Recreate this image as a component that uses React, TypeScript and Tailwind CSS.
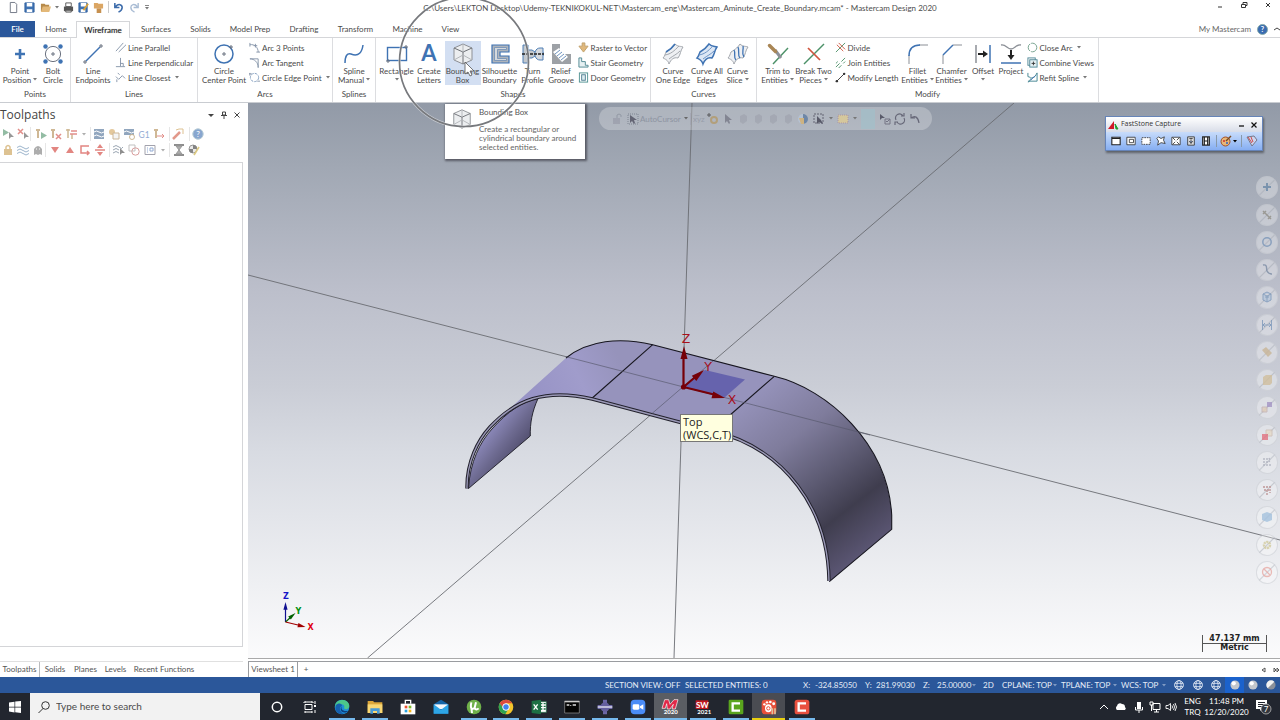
import React from "react";

type Kids = { children?: React.ReactNode };

function Ico({ children, c = "size-6", v = 24 }: Kids & { c?: string; v?: number }) {
  return (
    <svg viewBox={`0 0 ${v} ${v}`} className={`${c} shrink-0 overflow-visible`} fill="none" strokeWidth="1" stroke="#6b7280" aria-hidden="true">
      {children}
    </svg>
  );
}

const BLUE = "#3f73b3";
const GRAY = "#8b8f96";

function Caret({ c = "text-[#777]" }: { c?: string }) {
  return (
    <svg viewBox="0 0 4 3" className={`inline-block h-[3px] w-1 shrink-0 ${c}`} aria-hidden="true">
      <path d="M0 0h4L2 2.5z" fill="currentColor" />
    </svg>
  );
}

function Big({ icon, lines, w, menu, active }: { icon: React.ReactNode; lines: string[]; w: string; menu?: boolean; active?: boolean }) {
  return (
    <button className={`${w} ${active ? "bg-[#d3dff2]" : ""} mt-px flex h-[44px] shrink-0 flex-col items-center pt-px`}>
      <Ico>{icon}</Ico>
      {lines.map((l, i) => (
        <span key={l} className="flex h-[9px] items-center gap-0.5 whitespace-nowrap leading-[10px]">
          {l}
          {menu && i === lines.length - 1 && i > 0 && <Caret />}
        </span>
      ))}
      {menu && lines.length === 1 && <span className="flex h-[9px] items-center"><Caret /></span>}
    </button>
  );
}

function Small({ icon, label, menu }: { icon: React.ReactNode; label: string; menu?: boolean }) {
  return (
    <button className="flex h-[15px] items-center gap-0.5 whitespace-nowrap">
      <Ico c="size-[11px]" v={12}>{icon}</Ico>
      {label}
      {menu && <span className="ml-0.5 flex"><Caret /></span>}
    </button>
  );
}

function Group({ name, w, children }: Kids & { name: string; w: string }) {
  return (
    <section aria-label={name} className={`${w} flex shrink-0 flex-col`}>
      <div className="flex h-full border-r border-[#dcdde0]">
        <div className="flex w-full flex-col">
          <div className="flex h-[49px] items-start justify-center pt-0.5">{children}</div>
          <div className="text-center leading-4">{name}</div>
        </div>
      </div>
    </section>
  );
}

const surface = "M5 10C10 7 12 5 14 2C17 5 20 4 22 5C19 9 20 12 17 16C13 15 10 17 8 22C7 18 4 17 2 16C4 14 4 12 5 10z";

function Ribbon() {
  return (
    <div className="flex h-[65px] overflow-hidden border-b border-[#c9ccd1] bg-white">
      <Group name="Points" w="w-[71px]">
        <Big w="w-[36px]" lines={["Point", "Position"]} menu icon={<path d="M12 7v10M7 12h10" stroke={BLUE} strokeWidth="2.6" />} />
        <Big w="w-[30px]" lines={["Bolt", "Circle"]} icon={<>
          <circle cx="12" cy="12" r="7.6" /><path d="M12 10v4M10 12h4" />
          <g fill={BLUE} stroke="none"><circle cx="4.500" cy="4.500" r="2.200" /><circle cx="19.500" cy="4.500" r="2.200" /><circle cx="4.500" cy="19.500" r="2.200" /><circle cx="19.500" cy="19.500" r="2.200" /></g>
        </>} />
      </Group>
      <Group name="Lines" w="w-[127px]">
        <Big w="w-[40px]" lines={["Line", "Endpoints"]} icon={<>
          <path d="M5 19L19 5" stroke={BLUE} strokeWidth="1.500" /><path d="M4 18v4M2 20h4M20 2v4M18 4h4" />
        </>} />
        <div className="ml-0.5 flex w-[80px] flex-col">
          <Small label="Line Parallel" icon={<path d="M1 10L9 1M4 11L12 3" stroke="#8494a8" />} />
          <Small label="Line Perpendicular" icon={<path d="M6 1v9M1 10.500h10M6 7h3v3" stroke="#8494a8" />} />
          <Small label="Line Closest" menu icon={<path d="M1 5l3 3M4 8L8 4M8 4l3 3M3 1l2 2M2 8v3" stroke="#8494a8" />} />
        </div>
      </Group>
      <Group name="Arcs" w="w-[135px]">
        <Big w="w-[46px]" lines={["Circle", "Center Point"]} icon={<>
          <circle cx="12" cy="12" r="9" stroke={BLUE} strokeWidth="1.500" /><path d="M12 10v4M10 12h4M19 3v4M17 5h4" />
        </>} />
        <div className="ml-0.5 flex w-[80px] flex-col">
          <Small label="Arc 3 Points" icon={<path d="M1 3c5-1 9 3 9 8M1 1v4M7 2v4M5 4h4M8 11h4" stroke="#8494a8" />} />
          <Small label="Arc Tangent" icon={<path d="M1 2h9v10M1 2c5 0 9 4 9 9" stroke="#8494a8" />} />
          <Small label="Circle Edge Point" menu icon={<><circle cx="6" cy="6" r="4.500" strokeDasharray="3 1.200" stroke="#7f9bbd" /><path d="M1 1v3M0 2h3M9 10h3" stroke="#8494a8" /></>} />
        </div>
      </Group>
      <Group name="Splines" w="w-[43px]">
        <Big w="w-[36px]" lines={["Spline", "Manual"]} menu icon={<path d="M3 21C3 14 5 11 9 12C17 15 20 10 21 3" stroke={BLUE} strokeWidth="1.500" />} />
      </Group>
      <Group name="Shapes" w="w-[275px]">
        <Big w="w-[34px]" lines={["Rectangle"]} menu icon={<><rect x="2.500" y="5.500" width="19" height="13" stroke={BLUE} strokeWidth="1.400" /><path d="M21 3v4M19 5h4M3 17v4M1 19h4" /></>} />
        <Big w="w-[31px]" lines={["Create", "Letters"]} icon={<text x="12" y="19" textAnchor="middle" fontSize="22" fontWeight="700" stroke="none" fill={BLUE}>A</text>} />
        <Big w="w-[36px]" active lines={["Bounding", "Box"]} icon={<Cube />} />
        <Big w="w-[38px]" lines={["Silhouette", "Boundary"]} icon={<><path d="M4 3h17v7h-9v4h9v7H4z" fill="#aeb4bb" stroke={BLUE} strokeWidth="1.200" /><path d="M6.500 5.500h12v2h-9v9h9v2h-12z" fill="#d5d9dd" stroke="#6d8db5" strokeWidth=".8" /></>} />
        <Big w="w-[28px]" lines={["Turn", "Profile"]} icon={<><path d="M2 3h5v5h4l3 2h8v4h-8l-3 2H7v5H2z" fill="#c3c8cd" stroke="#4f7fb5" /><path d="M14 10c1-3 3-4 5-4h3v12h-3c-2 0-4-1-5-4z" fill="#d5dae0" stroke="#4f7fb5" /><path d="M1 12h22" stroke="#222" strokeWidth="1.500" strokeDasharray="3 1" /></>} />
        <Big w="w-[29px]" lines={["Relief", "Groove"]} icon={<><path d="M3 2h8v7l3 3h8v10H3z" fill="#9da1a6" stroke="none" /><path d="M4 10l6-4 9 9-6 5z" fill="#fff" stroke="none" /><path d="M6 12l5-4M8 14l5-4M10 16l5-4M12 18l5-4" stroke="#6e94bf" /></>} />
        <div className="ml-0.5 flex w-[69px] flex-col">
          <Small label="Raster to Vector" icon={<path d="M4.500 1h3v3.500H11L6 11 1 4.500h3.500z" fill="#e0b87c" stroke="#c0a06a" />} />
          <Small label="Stair Geometry" icon={<path d="M1 1h3v4h4v4h3v2H1z" stroke="#4f8791" fill="#e6f0f2" />} />
          <Small label="Door Geometry" icon={<><rect x="1.500" y="1" width="9" height="10" stroke="#4f9191" /><rect x="4" y="3" width="4" height="6" stroke="#4f7d91" fill="#dcecf0" /></>} />
        </div>
      </Group>
      <Group name="Curves" w="w-[106px]">
        <Big w="w-[36px]" lines={["Curve", "One Edge"]} icon={<><path d={surface} stroke="#a3a7ad" fill="#eef0f3" /><path d="M5 10C10 7 12 5 14 2" stroke={BLUE} strokeWidth="1.600" /><path d="M4 13c6-1 9-4 14-9M8 17c5-4 7-4 11-8" stroke="#a3a7ad" /></>} />
        <Big w="w-[32px]" lines={["Curve All", "Edges"]} icon={<><path d={surface} stroke={BLUE} strokeWidth="1.500" fill="#dce7f5" /><path d="M4 13c6-1 9-4 14-9M8 17c5-4 7-4 11-8" stroke="#6e94c4" /></>} />
        <Big w="w-[29px]" lines={["Curve", "Slice"]} menu icon={<><path d={surface} stroke="#a3a7ad" fill="#eef0f3" /><path d="M8 8c2 3-1 7 2 10M12 5c2 4-1 8 2 11M17 4c1 4-2 7 1 11" stroke={BLUE} strokeWidth="1.300" /></>} />
      </Group>
      <Group name="Modify" w="w-[342px]">
        <Big w="w-[34px]" lines={["Trim to", "Entities"]} menu icon={<><path d="M7 22L22 6" stroke="#4c9168" strokeWidth="1.400" /><path d="M9 8l6 8" stroke="#8d9198" strokeWidth="3" /><path d="M3.500 3.500l6 6" stroke="#a98655" strokeWidth="3.500" strokeLinecap="round" /></>} />
        <Big w="w-[38px]" lines={["Break Two", "Pieces"]} menu icon={<><path d="M2 22L22 2" stroke="#4c9168" strokeWidth="1.400" /><path d="M6 6l12 12" stroke="#d0563f" strokeWidth="1.700" /></>} />
        <div className="ml-0.5 flex w-[66px] flex-col">
          <Small label="Divide" icon={<><path d="M1 11L11 1" stroke="#4c9168" /><path d="M2 3l7 7M4 1l7 7" stroke="#d0563f" /></>} />
          <Small label="Join Entities" icon={<path d="M1 11L5 7M7 5l4-4M4 12l3-3M9 7l2-2M1 7l2-2" stroke="#4c9168" />} />
          <Small label="Modify Length" icon={<><path d="M2 10l8-8" stroke="#333" /><circle cx="10" cy="2" r="1.300" fill="#333" stroke="none" /><circle cx="2" cy="10" r="1.300" fill="#333" stroke="none" /></>} />
        </div>
        <Big w="w-[34px]" lines={["Fillet", "Entities"]} menu icon={<><path d="M3 22V13M13 3h9" stroke={GRAY} /><path d="M3 14C3 7 7 3 14 3" stroke={BLUE} strokeWidth="1.500" /></>} />
        <Big w="w-[34px]" lines={["Chamfer", "Entities"]} menu icon={<><path d="M3 22V13M13 3h9" stroke={GRAY} /><path d="M3 13L13 3" stroke={BLUE} strokeWidth="1.500" /></>} />
        <Big w="w-[29px]" lines={["Offset"]} menu icon={<><path d="M5 3v18" stroke={GRAY} strokeWidth="1.500" /><path d="M19 3v18" stroke={BLUE} strokeWidth="1.500" /><path d="M7 12h6" stroke="#222" strokeWidth="2" /><path d="M12 8.500l5 3.500-5 3.500z" fill="#222" stroke="none" /></>} />
        <Big w="w-[27px]" lines={["Project"]} icon={<><path d="M2 3c5-1 6 4 10 4s5-5 10-4" stroke={GRAY} strokeWidth="1.300" /><path d="M2 21h20" stroke={BLUE} strokeWidth="1.500" /><path d="M12 8v6" stroke="#222" strokeWidth="2" /><path d="M8.500 13h7L12 18z" fill="#222" stroke="none" /></>} />
        <div className="ml-0.5 flex w-[68px] flex-col">
          <Small label="Close Arc" menu icon={<><circle cx="6" cy="6" r="4.700" stroke="#6d9c88" strokeDasharray="9 1" /></>} />
          <Small label="Combine Views" icon={<><rect x="1" y="1" width="8" height="8" stroke="#4d8695" /><rect x="3" y="3" width="8" height="8" stroke="#4d8695" fill="#e3eff2" /><path d="M7 5v4M5 7h4" stroke="#333" /></>} />
          <Small label="Refit Spline" menu icon={<><path d="M1 1v4l3 1M1 11c3 0 2-5 5-5s3-2 5-5v9H1" stroke="#40828f" /><path d="M4 9l5-5" stroke={BLUE} /></>} />
        </div>
      </Group>
    </div>
  );
}

function Cube() {
  return (
    <>
      <path d="M12 2l9 4v12l-9 4-9-4V6z" fill="#eceef0" stroke="#8d9095" />
      <path d="M3 6l9 4 9-4M12 10v12" stroke="#6e7176" />
      <path d="M12 2v8M3 18l9-5 9 5" stroke="#b3b6ba" />
    </>
  );
}

function TitleBar() {
  return (
    <header className="flex h-[21px] items-start px-2">
      <div className="flex flex-1 basis-0 items-center gap-1 pt-px">
        <Ico c="size-[11px]" v={12}><path d="M2.500.5h5l2 2v9h-7z" /></Ico>
        <Ico c="ml-px size-[11px]" v={12}><path d="M1 1h10v10H1z" fill="#3f73b3" stroke="#2f5e9e" /><path d="M3 1h6v4H3zM3 8h6v3H3z" fill="#fff" stroke="none" /></Ico>
        <Ico c="ml-px size-[11px]" v={12}><path d="M1 2h4l1 1h4v7H1z" fill="#b78a4a" stroke="none" /><path d="M3 5h9l-2 6H1z" fill="#e3b878" stroke="none" /></Ico>
        <Caret />
        <Ico c="size-[11px]" v={12}><path d="M3 1h6v4H3z" fill="#fff" stroke="#555" /><path d="M1 5h10v5H1z" fill="#555" stroke="none" /><path d="M3 9h6v2H3z" fill="#ddd" stroke="#555" /></Ico>
        <Ico c="size-[11px]" v={12}><path d="M1 1h9v10H1z" fill="#3f73b3" stroke="#2f5e9e" /><path d="M3 1h6v4H3zM3 8h5v3H3z" fill="#fff" stroke="none" /><path d="M6 9l5-7" stroke="#d9a23b" strokeWidth="2" /></Ico>
        <Ico c="size-[11px]" v={12}><path d="M1 1h4l1 1h5v5H1z" fill="#dba664" stroke="none" /><path d="M4 7h5v5H4z" fill="#c6904f" stroke="none" /></Ico>
        <span className="h-3 w-px bg-[#ccc]" />
        <Ico c="size-[11px]" v={12}><path d="M3 5c3-4 7-2 7 1 0 2-2 4-4 5M2 1v5h5" stroke="#3d6cab" strokeWidth="1.700" /></Ico>
        <Ico c="ml-px size-[11px]" v={12}><path d="M9 5C6 1 2 3 2 6c0 2 2 4 4 5M10 1v5H5" stroke="#a9bcd4" strokeWidth="1.500" /></Ico>
        <span className="ml-px flex flex-col gap-px text-[#666]"><span className="h-px w-1 bg-[#888]" /><Caret /></span>
      </div>
      <h1 className="whitespace-nowrap pl-20 pt-0.5 text-[8px] leading-[13px] text-[#4c4c4c]">C:\Users\LEKTON Desktop\Udemy-TEKNIKOKUL-NET\Mastercam_eng\Mastercam_Aminute_Create_Boundary.mcam* - Mastercam Design 2020</h1>
      <div className="flex flex-1 basis-0 items-center justify-end gap-4 pt-px">
        <button aria-label="Minimize"><Ico c="size-2" v={8}><path d="M2 6h4" stroke="#333" /></Ico></button>
        <button aria-label="Restore"><Ico c="size-2" v={8}><path d="M1.500 3.500h4v3h-4zM3 3V1.500h4v3H6" stroke="#333" /></Ico></button>
        <button aria-label="Close"><Ico c="size-2" v={8}><path d="M2 2l4 4M6 2l-4 4" stroke="#333" /></Ico></button>
      </div>
    </header>
  );
}

const tabs: [string, string][] = [["Home", "w-[40px]"], ["Wireframe", "w-[54px]"], ["Surfaces", "w-[52px]"], ["Solids", "w-[37px]"], ["Model Prep", "w-[62px]"], ["Drafting", "w-[46px]"], ["Transform", "w-[57px]"], ["Machine", "w-[47px]"], ["View", "w-[39px]"]];

function Tabs() {
  return (
    <nav className="flex h-[17px] items-stretch border-b border-[#d5d6d9]">
      <button className="w-[35px] bg-[#2b579a] font-semibold text-white">File</button>
      {tabs.map(([t, w]) => (
        <button key={t} className={`${w} whitespace-nowrap ${t === "Wireframe" ? "relative -mb-px border border-b-0 border-[#d5d6d9] bg-white text-[#222] [text-shadow:0_0_1px_#999]" : ""} ${t === "Home" ? "ml-px" : ""}`}>{t}</button>
      ))}
      <div className="ml-auto flex items-center gap-1.5">
        <a href="#my" className="text-[#666]">My Mastercam</a>
        <Ico c="size-[11px]" v={12}><circle cx="6" cy="6" r="5.500" fill="#3a6cb0" stroke="#8aa" /><text x="6" y="9" textAnchor="middle" fontSize="8" fontWeight="700" fill="#fff" stroke="none">?</text></Ico>
        <Ico c="size-[6px]" v={6}><path d="M0 4l3-2 3 2" stroke="#444" /></Ico>
      </div>
    </nav>
  );
}

const Sep = () => <span className="h-3.5 w-px shrink-0 bg-[#d6d6d6]" />;
const T = ({ children }: Kids) => <button className="flex w-[15px] shrink-0 justify-center"><Ico c="size-3" v={12}>{children}</Ico></button>;

function SidePanel() {
  return (
    <aside className="flex w-[243px] shrink-0 flex-col">
      <div className="flex h-[23px] items-center justify-between pr-0.5 text-[#444]">
        <h2 className="font-['Open_Sans',sans-serif] text-[12px]">Toolpaths</h2>
        <div className="flex items-center gap-[5px]">
          <Ico c="size-2" v={8}><path d="M1 3h6L4 6z" fill="#444" stroke="none" /></Ico>
          <Ico c="size-2" v={8}><path d="M2.500 1h3v3h-3zM1 4.500h6M4 5v3" stroke="#444" /></Ico>
          <Ico c="size-2" v={8}><path d="M1.500 1.500l5 5M6.500 1.500l-5 5" stroke="#444" /></Ico>
        </div>
      </div>
      <div className="flex h-4 items-center opacity-60">
        <T><path d="M1 1l6 3.500L1 8z" fill="#4c9168" stroke="none" /><path d="M7 4v7l2-2h3z" fill="#555" stroke="none" /></T>
        <T><path d="M1 1l5 5M6 1L1 6" stroke="#d0463f" strokeWidth="1.500" /><path d="M7 4v7l2-2h3z" fill="#555" stroke="none" /></T>
        <Sep /><span className="w-0.5" />
        <T><path d="M3 1v9M1 2h4" stroke="#b08a4f" strokeWidth="2" /><path d="M6 4l6 3.500L6 11z" fill="#4c9168" stroke="none" /></T>
        <T><path d="M3 1v9M1 2h4" stroke="#b08a4f" strokeWidth="2" /><path d="M6 6l5 5M11 6l-5 5" stroke="#d0463f" strokeWidth="1.500" /></T>
        <T><path d="M3 1v9M1 2h4M7 6v5" stroke="#b08a4f" strokeWidth="1.500" /><path d="M6 3h6M5 6h7" stroke="#d0463f" strokeWidth="1.500" /></T>
        <span className="mx-1 flex"><Caret /></span><Sep />
        <T><path d="M1 1h10v10H1z" fill="#496c93" stroke="none" /><path d="M1 4q2.500-2 5 0t5 0M1 8q2.500-2 5 0t5 0" stroke="#fff" /></T>
        <T><circle cx="4" cy="4" r="3" fill="#d3a45c" stroke="none" /><path d="M5 5h6v6H5z" fill="#eee" stroke="#a98655" /></T>
        <T><path d="M1 1h10v6H1z" fill="#496c93" stroke="none" /><path d="M1 4q2.500-2 5 0t5 0M1 9h5" stroke="#fff" /><circle cx="9" cy="9" r="2.500" stroke="#b08a4f" /></T>
        <T><text x="6" y="9.500" textAnchor="middle" fontSize="8.500" fill="#4a74b8" stroke="none">G1</text></T>
        <T><path d="M3 1v9M1 2h4" stroke="#b08a4f" strokeWidth="2" /><path d="M4 8h7M9 6l2 2-2 2" stroke="#d0463f" /></T>
        <span className="w-[3px]" /><Sep />
        <T><path d="M1 11L8 4" stroke="#d0563f" strokeWidth="2.500" /><path d="M4 2l3-1h4v5" stroke="#c79a4a" /></T>
        <span className="w-1" /><Sep />
        <T><circle cx="6" cy="6" r="5.200" fill="#3a6cb0" stroke="#8ab" /><text x="6" y="9" textAnchor="middle" fontSize="8" fill="#fff" stroke="none">?</text></T>
      </div>
      <div className="flex h-4 items-center opacity-60">
        <T><path d="M2 5h8v6H2z" fill="#c79a4a" stroke="none" /><path d="M4 5V3q2-3 4 0v2" stroke="#c79a4a" strokeWidth="1.500" /></T>
        <T><path d="M0 3.500q3-3 6 0t6 0M0 6.500q3-3 6 0t6 0M0 9.500q3-3 6 0t6 0" stroke="#5b84ab" /></T>
        <T><path d="M2 11V5q4-6 8 0v6l-2-1-2 1-2-1z" fill="#777" stroke="none" /><path d="M4 5h1M7 5h1" stroke="#fff" /></T>
        <Sep />
        <span className="w-px" />
        <T><path d="M2 3h8L6 9z" fill="#d0362f" stroke="none" /></T>
        <T><path d="M2 9h8L6 3z" fill="#d0362f" stroke="none" /></T>
        <T><path d="M10 2H2v7h8M8 7l2 2-2 2" stroke="#d0362f" strokeWidth="1.500" /></T>
        <T><path d="M1 6h10" stroke="#d0362f" strokeWidth="1.500" /><path d="M3 4h6L6 0zM3 8h6L6 12z" fill="#d0362f" stroke="none" /></T>
        <span className="w-0.5" /><Sep /><span className="w-px" />
        <T><path d="M0 3q3-3 6 0t4 0M0 6q3-3 6 0M0 9q3-3 6 0" stroke="#5a6d82" /><path d="M7 4v7l2-2h3z" fill="#444" stroke="none" /></T>
        <T><path d="M1 1h6v6H1z" stroke="#999" /><circle cx="7.500" cy="7.500" r="3.700" stroke="#c0605f" /></T>
        <span className="w-px" />
        <T><path d="M1 1.500h10v9H1z" stroke="#667" /><path d="M3 4h1M3 6h1M3 8h1M6 4h3v3H6z" stroke="#4a74b8" /></T>
        <span className="mx-1 flex"><Caret /></span><Sep /><span className="w-px" />
        <T><path d="M1 1h10M1 11h10" stroke="#444" strokeWidth="2" /><path d="M3 2h6L3 10h6z" fill="#777" stroke="#555" /></T>
        <T><circle cx="5" cy="5" r="4" stroke="#555" fill="#ddd" /><path d="M5 1v4h4A4 4 0 005 1zM5 5v4a4 4 0 01-4-4z" fill="#333" stroke="none" /><path d="M6 11l5-8" stroke="#c7a72f" strokeWidth="1.600" /></T>
      </div>
      <div className="mt-1 flex-1 border-y border-r border-[#d4d5d8] bg-white" />
      <div className="mt-3.5 flex h-4 items-stretch border-t border-[#e0e0e0] text-[#555]">
        <button className="w-[40px] border-r border-[#b9bbbe] pb-0.5">Toolpaths</button>
        <button className="w-[30px] pb-0.5">Solids</button>
        <button className="w-[31px] pb-0.5">Planes</button>
        <button className="w-[29px] pb-0.5">Levels</button>
        <button className="w-[68px] whitespace-nowrap pb-0.5">Recent Functions</button>
      </div>
    </aside>
  );
}

function Arrow({ x, y, a, c, s = 1 }: { x: number; y: number; a: number; c: string; s?: number }) {
  return <path d="M0 0L-13 -3.500L-13 3.500z" fill={c} transform={`translate(${x} ${y}) rotate(${a}) scale(${s})`} />;
}

const frontEdge = "M467 488.500C466.500 462 478 440 490 427C515 400 545 388 592.300 399L711 430.500C786 448 828 510 829 581";

function Scene() {
  return (
    <svg viewBox="248 103 1032 555" preserveAspectRatio="xMidYMid slice" className="absolute inset-0 size-full" fill="none" role="img" aria-label="Part model">
      <defs>
        <linearGradient id="right" gradientUnits="userSpaceOnUse" x1="752" y1="395" x2="872" y2="550">
          <stop offset="0" stopColor="#9592ba" /><stop offset=".3" stopColor="#7f7c9c" /><stop offset=".55" stopColor="#5d5b73" /><stop offset=".76" stopColor="#3f3d4e" /><stop offset="1" stopColor="#5c5775" />
        </linearGradient>
        <linearGradient id="left" gradientUnits="userSpaceOnUse" x1="620" y1="360" x2="540" y2="400">
          <stop offset="0" stopColor="#9693bb" /><stop offset=".5" stopColor="#a09ccb" /><stop offset="1" stopColor="#9894c6" />
        </linearGradient>
        <linearGradient id="inner" gradientUnits="userSpaceOnUse" x1="492" y1="422" x2="527" y2="450">
          <stop offset="0" stopColor="#908dc0" /><stop offset=".5" stopColor="#6d6a90" /><stop offset="1" stopColor="#4b4866" />
        </linearGradient>
      </defs>
      <path d="M248 275L1280 540M1014 103L367.500 658M692 103L674 658" stroke="#6a6c72" strokeWidth=".9" />
      <path d="M468.500 488.500C470 462 480 442 492 429C508 411 522 402 538 398.500C532 412 530 423 530.300 436z" fill="url(#inner)" stroke="#1d1c26" strokeWidth=".9" />
      <path d="M652.700 344.700C620 337 588 340 566 358L506 412C535 391 563 391 592.300 398z" fill="url(#left)" />
      <path d="M652.700 344.700L774.300 376.300L713 430L592.300 398z" fill="#9693bc" />
      <path d="M774.300 376.300C828 389 888 444 891.700 515V529.300L829.300 581.700C828 510 786 448 713 430z" fill="url(#right)" />
      <path d="M829.300 581.700L891.700 529.300V515C888 444 828 389 774.300 376.300L652.700 344.700C620 337 588 340 566 358" stroke="#17161f" strokeWidth="1.100" />
      <path d="M652.700 344.700L592.300 398M774.300 376.300L713 430" stroke="#17161f" strokeWidth="1.100" />
      <path d={frontEdge} stroke="#22212c" strokeWidth="3.400" />
      <path d={frontEdge} stroke="#9a98b6" strokeWidth="1.400" />
      <path d="M566 356.700L870 435M713 361L652 413.500" stroke="#55576a" strokeWidth=".8" opacity=".8" />
      <path d="M683 387L705 370L745 379.500L724 398z" fill="#615eab" opacity=".9" />
      <path d="M683.500 387V355M683.500 387L697 375.500M683.500 387L716 395" stroke="#760008" strokeWidth="2.200" />
      <circle cx="683.500" cy="387" r="2.600" fill="#760008" />
      <Arrow x={684} y={346} a={-90} c="#760008" />
      <Arrow x={704} y={370} a={-40} c="#760008" />
      <Arrow x={725} y={398} a={14} c="#760008" />
      <g fill="#a8101c" fontSize="12.500" fontFamily="'DejaVu Sans', sans-serif" textAnchor="middle">
        <text x="686" y="343">Z</text><text x="708" y="371">Y</text><text x="732" y="404">X</text>
      </g>
      <path d="M285.500 622V608" stroke="#101090" strokeWidth="1.200" />
      <path d="M285.500 622L291 617" stroke="#006000" strokeWidth="1.200" />
      <path d="M285.500 622L298 625" stroke="#a00000" strokeWidth="1.200" />
      <Arrow x={285.5} y={602} a={-90} c="#101090" s={0.6} />
      <Arrow x={295.5} y={613} a={-40} c="#006000" s={0.6} />
      <Arrow x={305.5} y={627} a={14} c="#a00000" s={0.6} />
      <g fontSize="8" fontWeight="700" fontFamily="'DejaVu Sans', sans-serif" textAnchor="middle">
        <text x="286" y="599" fill="#1515c8">Z</text><text x="298.500" y="614" fill="#009010">Y</text><text x="310.500" y="630" fill="#e00010">X</text>
      </g>
    </svg>
  );
}

const sideIcons: React.ReactNode[] = [
  <path d="M6 2v8M2 6h8" stroke="#5b7fa3" strokeWidth="2" />,
  <path d="M2 2l8 8M2 5l3-3M7 10l3-3" stroke="#8a8578" strokeWidth="1.500" />,
  <circle cx="6" cy="6" r="4.200" stroke="#6b8db5" strokeWidth="1.500" />,
  <path d="M2 1c5-1 3 4 4 6s2 3 5 3" stroke="#6b7f9b" strokeWidth="1.400" />,
  <path d="M2 3l4-2 4 2v6l-4 2-4-2zM2 3l4 2 4-2M6 5v6M4 6h4" fill="#b7c9df" stroke="#6b8db5" />,
  <path d="M1.500 1v10M10.500 1v10M2 6h8M4 4L2 6l2 2M8 4l2 2-2 2" stroke="#6b8db5" />,
  <path d="M1 4l4-3 6 6-4 4z" fill="#c9b088" stroke="none" />,
  <path d="M2 3l3-2h6v8l-2 2H2z" fill="#d2bc90" stroke="none" />,
  <><path d="M6 1h5v5H6z" fill="#9a86c0" stroke="none" /><path d="M1 6h5v5H1z" fill="#e5ccb0" stroke="#c0aaaa" /></>,
  <><path d="M5 1h6v6H5z" fill="#ecdcc4" stroke="#ccb8a8" /><path d="M1 5h6v6H1z" fill="#e65a68" stroke="none" /></>,
  <path d="M3 2v8M6 2v8M8 2l1 2-1 2M8 9h2" stroke="#a0a3b0" strokeDasharray="2 1" strokeWidth="1.500" />,
  <path d="M2 3h8M3 6h6M6 6v5M9 5v4" stroke="#b98a8a" strokeDasharray="2 1" strokeWidth="1.800" />,
  <path d="M1 3l5-2 5 2v6l-5 2-5-2z" fill="#94b9db" stroke="none" />,
  <circle cx="6" cy="6" r="3" stroke="#cdc38a" strokeWidth="2.500" strokeDasharray="2 .6" />,
  <><circle cx="6" cy="6" r="4.500" stroke="#e79a94" strokeWidth="1.300" /><path d="M3 3l6 6" stroke="#e79a94" strokeWidth="1.300" /></>,
];

const fsIcons: React.ReactNode[] = [
  <path d="M1 1.500h10v9H1zM1 3h10" fill="#fff" stroke="#222" strokeWidth="1.300" />,
  <path d="M1 1.500h10v9H1zM4 4h5v4H4z" fill="#fff" stroke="#333" />,
  <path d="M1 2h10v8H1z" fill="#fff" stroke="#333" strokeDasharray="2 1" />,
  <path d="M3 1l3 2 4-2-1 4 2 4-5-1-4 3 1-5-2-3z" fill="#fff" stroke="#333" />,
  <path d="M1 1.500h10v9H1zM2 2l3 3M10 2L7 5M2 10l3-3M10 10L7 7" fill="#fff" stroke="#333" />,
  <path d="M2 1h8v10H2zM4 3h4M6 4v4M4 6l2 3 2-3" fill="#ddd" stroke="#333" />,
  <path d="M2 1h8v10H2zM4 1v10M8 1v10M4 6h4" fill="#fff" stroke="#222" strokeWidth="1.400" />,
];

function FastStone() {
  return (
    <div className="absolute right-[17px] top-[13px] flex h-[35px] w-[158px] flex-col border border-[#6684b8] bg-white shadow-[1px_2px_2px_rgba(0,0,0,.4)]">
      <div className="flex h-[15px] items-center gap-[3px] bg-gradient-to-b from-white to-[#d9dde8] px-0.5">
        <Ico c="size-2.5" v={10}><path d="M0 9L6 1v8z" fill="#d01828" stroke="none" /><path d="M7 4l3 5-2 0z" fill="#20a030" stroke="#20a030" /></Ico>
        <span className="flex-1 font-['Open_Sans',sans-serif] text-[7px] text-[#333]">FastStone Capture</span>
        <Ico c="mr-px size-2" v={8}><path d="M1 5h5" stroke="#111" strokeWidth="1.300" /></Ico>
        <Ico c="mr-0.5 size-2" v={8}><path d="M1.500 1.500l5 5M6.500 1.500l-5 5" stroke="#111" strokeWidth="1.200" /></Ico>
      </div>
      <div className="flex flex-1 items-center bg-gradient-to-b from-[#c8dcfa] to-[#86aef2] pl-0.5">
        {fsIcons.map((i, k) => <button key={k} aria-label={`Capture ${k + 1}`} className="flex w-[15px] shrink-0 justify-center"><Ico c="size-2.5" v={12}>{i}</Ico></button>)}
        <span className="mx-[3px] h-3 w-px bg-[#89a]" />
        <Ico c="size-3" v={12}><circle cx="5.500" cy="6.500" r="4.500" fill="#e8b678" stroke="#a05028" /><circle cx="4" cy="6" r="1" fill="#d03030" stroke="none" /><circle cx="7" cy="8" r="1" fill="#3060c0" stroke="none" /><path d="M6 6l5-5" stroke="#7a4a20" strokeWidth="1.500" /></Ico>
        <Caret c="ml-px text-black" />
        <span className="mx-1 h-3 w-px bg-[#89a]" />
        <Ico c="size-3" v={12}><path d="M1 2l7-1 3 4-5 6z" fill="#cdd6f0" stroke="#778" /><path d="M2 2l4 6M5 2l2 5" stroke="#d04848" /></Ico>
      </div>
    </div>
  );
}

function AutoCursor() {
  return (
    <div className="absolute left-[351px] top-1 flex h-[23px] w-[333px] items-center rounded-full bg-white/25 pl-3 text-[#8d94a1]">
      <Ico c="size-3 opacity-40" v={12}><path d="M2 5h7v6H2z" fill="#889" stroke="none" /><path d="M6 5V2q2-2 4 0v2" /></Ico>
      <Ico c="ml-1 size-3 opacity-70" v={12}><path d="M1 1h10v10H1z" strokeDasharray="1 1" /><path d="M3 2v8l2-2 2 3 1-1-1-3h3z" fill="#445" stroke="none" /></Ico>
      <span className="ml-px w-[44px] text-[8px]">AutoCursor</span>
      <Caret c="text-[#666]" />
      <span className="mx-0.5 h-3 w-px bg-[#99a]/40" />
      <span className="w-3.5 opacity-70">x̅yz</span>
      <Ico c="size-3 opacity-80" v={12}><circle cx="7" cy="7" r="3" stroke="#b39a6a" strokeWidth="2" /><path d="M2 0v4M0 2h4" stroke="#444" /></Ico>
      <Ico c="ml-[3px] size-3 opacity-50" v={12}><path d="M3 1v9l2-2 2 3 1-1-1-3h3z" fill="#556" stroke="none" /></Ico>
      {[0, 1, 2, 3].map((k) => <Ico key={k} c="ml-[3px] size-3 opacity-20" v={12}><path d="M3 3l4-2 3 2v5l-4 3-3-2z" fill="#778" stroke="none" /></Ico>)}
      <Ico c="ml-[3px] size-3 opacity-70" v={12}><circle cx="6" cy="6" r="5" fill="#b8c8dc" stroke="none" /><path d="M6 1a5 5 0 010 10z" fill="#54749c" stroke="none" /><path d="M2 5h5v6H4z" fill="#dbb268" stroke="none" /></Ico>
      <Ico c="ml-1 size-3 opacity-70" v={12}><path d="M1 1h9v9H1z" strokeDasharray="2 1" stroke="#445" /><path d="M4 3v8l2-2 4 2-2-4z" fill="#334" stroke="none" /></Ico>
      <span className="mx-1 flex"><Caret /></span>
      <Ico c="size-3 opacity-70" v={12}><path d="M1 2h10v8H1z" fill="#e5cf8e" stroke="#a89" strokeDasharray="1 1" /></Ico>
      <span className="mx-1 flex"><Caret /></span>
      <span className="h-5 w-3.5 bg-[#9cc3cd]/50" />
      <Ico c="ml-1 size-3 opacity-80" v={12}><path d="M1 1v6l2-2h3z" fill="#445" stroke="none" /><path d="M6 6h5v5H6zM7 8l1 1 3-3" stroke="#667" /></Ico>
      <Ico c="ml-[3px] size-3 opacity-80" v={12}><path d="M2 7a4 4 0 017-4M10 5a4 4 0 01-7 4M7 3h3V0M4 9H1v3" stroke="#556" strokeWidth="1.200" /></Ico>
      <Ico c="ml-[3px] size-3 opacity-80" v={12}><path d="M2 5c4-3 7-1 8 5M2 1v4h4" stroke="#556" strokeWidth="1.200" /></Ico>
    </div>
  );
}

function Viewport() {
  return (
    <main className="ml-[5px] flex min-w-0 flex-1 flex-col">
      <div className="relative flex-1 bg-[linear-gradient(#929aa7_0%,#a0a7b3_11%,#bcbfcb_34%,#cacdd6_51%,#d8dbe2_63%,#eff0f3_87%,#fbfbfc_100%)]">
        <Scene />
        <AutoCursor />
        <div role="tooltip" className="absolute left-[197px] top-px flex h-[55px] w-[140px] gap-1.5 bg-white pl-1.5 pt-1 text-[#666] shadow-[1px_1px_2px_1px_rgba(60,60,70,.7)]">
          <Ico c="size-[22px]"><Cube /></Ico>
          <div className="whitespace-nowrap leading-[9px]">
            <div className="mb-2 text-[#555]">Bounding Box</div>
            Create a rectangular or<br />cylindrical boundary around<br />selected entities.
          </div>
        </div>
        <div className="absolute left-[432px] top-[311px] w-[53px] whitespace-nowrap border border-[#777] bg-[#ffffdf] pl-0.5 font-['Open_Sans',sans-serif] text-[11px] leading-[13px] text-[#222]">Top<br />(WCS,C,T)</div>
        <FastStone />
        <div className="absolute right-0.5 top-[73px] flex flex-col gap-[5px]">
          {sideIcons.map((i, k) => (
            <button key={k} aria-label={`Select mask ${k + 1}`} className="flex h-[22.5px] w-[22px] items-center justify-center rounded-full border border-[#c3c7cd]/60 bg-white/40 bg-[linear-gradient(135deg,transparent_46%,#a5aab399_50%,transparent_54%)] opacity-80">
              <Ico c="size-3 opacity-80" v={12}>{i}</Ico>
            </button>
          ))}
        </div>
        <div className="absolute bottom-1.5 right-[13px] flex w-[65px] flex-col border-x border-[#555] text-center font-['DejaVu_Sans',sans-serif] text-[8px] font-bold leading-2 text-[#222]">
          <span className="border-b border-[#555]">47.137 mm</span>
          <span>Metric</span>
        </div>
      </div>
      <div className="h-[3px] border-t border-[#aaa] bg-white" />
      <div className="flex h-4 border-t border-[#9a9ca0] bg-white text-[#555]">
        <button className="w-[50px] border-x border-[#9a9ca0] pb-0.5">Viewsheet 1</button>
        <button className="w-4 pb-0.5">+</button>
        <div className="ml-auto flex items-center gap-1.5 pr-px">
          <Ico c="size-1.5" v={6}><path d="M4 1v4L1 3z" stroke="#555" /></Ico>
          <Ico c="size-1.5" v={6}><path d="M1 1v4l2-2zM4 1v4l2-2z" stroke="#555" /></Ico>
        </div>
      </div>
    </main>
  );
}

function Globe({ solid }: { solid?: boolean }) {
  return <Ico c="size-2.5" v={12}>{solid
    ? <><circle cx="6" cy="6" r="5.500" fill="#c3c7cc" stroke="none" /><circle cx="4.500" cy="4" r="2.500" fill="#fff" stroke="none" /></>
    : <><circle cx="6" cy="6" r="5.300" stroke="#e8eef8" /><ellipse cx="6" cy="6" rx="2.500" ry="5.300" stroke="#e8eef8" /><path d="M1 4h10M1 8h10" stroke="#e8eef8" /></>}</Ico>;
}

function StatusBar() {
  return (
    <footer className="flex h-4 items-center justify-end whitespace-nowrap bg-[#2b579a] text-[8px] text-[#e6edf8]">
      <span className="w-[80px]">SECTION VIEW: OFF</span>
      <span className="w-[118px]">SELECTED ENTITIES: 0</span>
      <span className="w-[12px]">X:</span><span className="w-[50px]">-324.85050</span>
      <span className="w-[11px]">Y:</span><span className="w-[47px]">281.99030</span>
      <span className="w-[14px]">Z:</span><span className="flex w-[46px] items-center gap-px">25.00000<Caret c="text-[#7f9ac4]" /></span>
      <button className="w-[19px] text-left">2D</button>
      <button className="flex w-[59px] items-center justify-between pr-1">CPLANE: TOP<Caret c="text-[#7f9ac4]" /></button>
      <button className="flex w-[60px] items-center justify-between pr-1">TPLANE: TOP<Caret c="text-[#7f9ac4]" /></button>
      <button className="flex w-[49px] items-center justify-between pr-1">WCS: TOP<Caret c="text-[#7f9ac4]" /></button>
      <span className="flex w-[110px] items-center">
        <span className="flex w-[18px] justify-center"><Globe /></span>
        <span className="flex w-[19px] justify-center"><Globe /></span>
        <span className="flex w-[18px] justify-center"><Globe /></span>
        <span className="flex h-4 w-[19px] items-center justify-center bg-[#1b62cc]"><Globe solid /></span>
        <span className="flex w-[18px] justify-center"><Globe solid /></span>
        <span className="flex w-[18px] justify-center"><Ico c="size-2.5" v={12}><circle cx="6" cy="6" r="5.500" fill="#8b9099" stroke="none" /><path d="M2 10a5.500 5.500 0 018-8z" fill="#f2f2f2" stroke="none" /></Ico></span>
      </span>
    </footer>
  );
}

const apps: { n: string; run?: boolean; on?: string; i: React.ReactNode }[] = [
  { n: "Edge", run: true, i: <><circle cx="12" cy="12" r="11" fill="#1f8fd6" stroke="none" /><path d="M2 8C5-1 22-1 23 10c0 6-7 6-8 4 2-4-1-6-5-6-4 0-7 2-8 5z" fill="#4cc78a" stroke="none" /><path d="M3 9c5-4 9-2 9 1-5 2-4 9 3 12C6 25 0 17 3 9z" fill="#1660ae" stroke="none" /><path d="M12 11c-2 3 0 6 4 7h5c-3 4-11 3-11-3 0-2 1-3 2-4z" fill="#0d3f80" stroke="none" /></> },
  { n: "Explorer", run: true, i: <><path d="M1 3h8l2 2h12v16H1z" fill="#dca63a" stroke="none" /><path d="M1 8h22v13H1z" fill="#f9d774" stroke="none" /><path d="M5 14h14v8h-4v-4H9v4H5z" fill="#4a9bd6" stroke="none" /></> },
  { n: "Store", i: <><path d="M8 7V2h8v5" stroke="#fff" strokeWidth="2" /><path d="M1 7h22v16H1z" fill="#fff" stroke="none" /><path d="M7 10h4v4H7z" fill="#e8512e" stroke="none" /><path d="M13 10h4v4h-4z" fill="#7ab829" stroke="none" /><path d="M7 16h4v4H7z" fill="#2ba3e0" stroke="none" /><path d="M13 16h4v4h-4z" fill="#f6b51d" stroke="none" /></> },
  { n: "Mail", i: <><path d="M1 8l11-7 11 7v14H1z" fill="#1565a8" stroke="none" /><path d="M2 8h20v7H2z" fill="#f4f8fc" stroke="none" /><path d="M1 8l11 8 11-8v14H1z" fill="#2ea5e6" stroke="none" /></> },
  { n: "uTorrent", run: true, i: <><circle cx="12" cy="12" r="11" fill="#6fb04a" stroke="none" /><path d="M8 5c-2 10 1 12 5 8l2-8M13 12c0 5 4 4 6 2M8 13l1 8" stroke="#fff" strokeWidth="3" /></> },
  { n: "Chrome", run: true, i: <><circle cx="12" cy="12" r="11" fill="#f3c52c" stroke="none" /><path d="M2.500 6.500A11 11 0 0121.500 6.500H12L7 14z" fill="#dd4b3e" stroke="none" /><path d="M2.500 6.500A11 11 0 0011 23l5-9H8z" fill="#2fa352" stroke="none" /><circle cx="12" cy="12" r="5" fill="#3f82ee" stroke="#fff" strokeWidth="1.500" /></> },
  { n: "Excel", run: true, i: <><path d="M12 4h11v16H12z" fill="#fff" stroke="#1d7044" /><path d="M14 7h3M19 7h3M14 11h3M19 11h3M14 15h3M19 15h3" stroke="#1d7044" strokeWidth="2" /><path d="M1 3l14-2v22L1 21z" fill="#1d7044" stroke="none" /><path d="M4 8l6 8M10 8l-6 8" stroke="#fff" strokeWidth="2" /></> },
  { n: "Command Prompt", run: true, i: <><path d="M1 3h22v18H1z" fill="#050505" stroke="#9a9a9a" /><path d="M1 4h22" stroke="#ccc" strokeWidth="2" /><path d="M4 9h4M10 9v1M13 9h5" stroke="#ddd" strokeWidth="2" /></> },
  { n: "Eclipse", run: true, i: <><path d="M9 1h6v8h8v6h-8v8H9v-8H1V9h8z" fill="#6b66a5" stroke="none" /><circle cx="12" cy="12" r="7" fill="#645e9c" stroke="none" /><path d="M1 12h22" stroke="#e9e9f5" strokeWidth="2" /></> },
  { n: "Zoom", run: true, i: <><rect x="1" y="1" width="22" height="22" rx="6" fill="#4a8cf7" stroke="none" /><rect x="4" y="8" width="10" height="8" rx="2" fill="#fff" stroke="none" /><path d="M15 11l5-3v8l-5-3z" fill="#fff" stroke="none" /></> },
  { n: "Mastercam", run: true, on: "bg-[#5a5d63]", i: <><path d="M0 14L4 1h6l2 7 6-7h6l-4 14h-5l2-7-5 7H8L7 7l-2 7z" fill="#e02848" stroke="#fff" strokeWidth="1" /><text x="13" y="22" textAnchor="middle" fontSize="9" fontWeight="700" fill="#fff" stroke="none">2020</text></> },
  { n: "SolidWorks", run: true, i: <><path d="M1 2h19v13H1z" fill="#c01820" stroke="none" /><text x="11" y="13" textAnchor="middle" fontSize="12" fontWeight="700" fill="#fff" stroke="none">SW</text><text x="14" y="22" textAnchor="middle" fontSize="9" fontWeight="700" fill="#fff" stroke="none">2021</text></> },
  { n: "Camtasia", run: true, i: <><rect x="1" y="1" width="22" height="22" rx="2" fill="#5aa51e" stroke="none" /><path d="M18 6.500H7v11h11" stroke="#fff" strokeWidth="3.500" /></> },
  { n: "GOM", run: true, on: "bg-[#4a4c52]", i: <><rect x="1" y="1" width="22" height="22" rx="5" fill="#e8503a" stroke="none" /><ellipse cx="11" cy="14" rx="5" ry="6" fill="#fff" stroke="none" /><circle cx="11" cy="14" r="2.500" stroke="#e8503a" strokeWidth="1.500" /><g fill="#fff" stroke="none"><circle cx="5" cy="8" r="1.800" /><circle cx="9" cy="5" r="1.800" /><circle cx="14" cy="4.500" r="2" /><circle cx="19" cy="7" r="2.200" /></g><path d="M17 14v9M21 14v9" stroke="#d9c29c" strokeWidth="2.500" /></> },
  { n: "Camtasia Recorder", run: true, i: <><rect x="1" y="1" width="22" height="22" rx="4" fill="#e8503f" stroke="none" /><path d="M18 6.500H7v11h11" stroke="#fff" strokeWidth="3.500" /></> },
];

function Taskbar() {
  return (
    <div className="flex h-[27px] items-stretch bg-[#22262f] text-white">
      <button aria-label="Start" className="flex w-[30px] items-center justify-center">
        <Ico c="size-3" v={12}><path d="M0 1.500l5.500-.8v5H0zM6.200.6L12 0v5.700H6.200zM0 6.400h5.500v5L0 10.600zM6.200 6.400H12V12l-5.800-.7z" fill="#fff" stroke="none" /></Ico>
      </button>
      <label className="flex w-[230px] items-center gap-1.5 bg-[#f2f2f2] pl-2">
        <Ico c="size-3" v={12}><circle cx="7.500" cy="4.500" r="3.800" stroke="#333" /><path d="M5 7.500L.5 12" stroke="#333" /></Ico>
        <input className="w-44 bg-transparent text-[10px] text-[#444] outline-none placeholder:text-[#4a4a4a]" placeholder="Type here to search" aria-label="Search" />
      </label>
      <button aria-label="Cortana" className="flex w-[33px] items-center justify-center"><Ico c="size-3" v={12}><circle cx="6" cy="6" r="4.700" stroke="#fff" strokeWidth="1.500" /></Ico></button>
      <button aria-label="Task view" className="flex w-[33px] items-center justify-center"><Ico c="size-3" v={12}><path d="M1 3.500h7v5H1zM0 1h2M7 1h2M0 11h2M7 11h2M0 1v1M9 1v1M1 1h7M1 11h7M11 0v3M11 9v3" stroke="#fff" /><path d="M10 5h2" stroke="#fff" strokeWidth="2" /></Ico></button>
      <div className="grid w-[492px] grid-cols-15">
        {apps.map((a) => (
          <button key={a.n} aria-label={a.n} className={`flex flex-col items-center ${a.on ?? ""}`}>
            <span className="flex h-[25px] items-center pt-0.5"><Ico c="size-4">{a.i}</Ico></span>
            {a.run && <span className={`h-0.5 ${a.n === "GOM" ? "w-full bg-[#e8cf10]" : a.on ? "w-full bg-[#76b9ed]" : "w-[26px] bg-[#76b9ed]"}`} />}
          </button>
        ))}
      </div>
      <div className="ml-auto flex items-center pr-2 text-[8px]">
        <Ico c="mr-1.5 size-2.5" v={10}><path d="M1 7l4-4 4 4" stroke="#fff" /></Ico>
        <Ico c="mr-1.5 size-3" v={12}><path d="M2 9a2.500 2.500 0 010-4 3 3 0 015-2 3 3 0 013 3 2 2 0 010 3z" fill="#fff" stroke="none" /></Ico>
        <Ico c="mr-1 size-3" v={12}><path d="M4 1h4v7H4z" fill="#fff" stroke="none" /><path d="M2.500 6v3h7V6M6 9v3" stroke="#fff" /></Ico>
        <Ico c="mr-1 size-3" v={12}><path d="M4 2.500h7v6H4zM5 11h5M7.500 9v2M1 1h3v3H1zM2.500 4v6" stroke="#fff" /></Ico>
        <Ico c="mr-1.5 size-3" v={12}><path d="M1 4.500h2l2.500-2v7L3 7.500H1zM7 4.500q1 1.500 0 3M8.500 3q2 3 0 6M10 2q3 4 0 8" stroke="#fff" strokeWidth=".9" /></Ico>
        <span className="w-[19px] text-center leading-[11px]">ENG<br />TRQ</span>
        <span className="w-[49px] text-center leading-[11px]">11:48 PM<br />12/20/2020</span>
        <Ico c="ml-1 size-[17px]" v={17}><path d="M1 2h11v9H7l-2 2v-2H1z" fill="#fff" stroke="none" /><path d="M3 4.500h7M3 6.500h7M3 8.500h4" stroke="#22262f" /><circle cx="11" cy="11" r="5" fill="#33363d" stroke="#bbb" strokeWidth=".8" /><text x="11" y="14" textAnchor="middle" fontSize="8" fill="#fff" stroke="none">7</text></Ico>
      </div>
    </div>
  );
}

export default function App() {
  return (
    <div className="relative flex h-screen flex-col overflow-hidden bg-white font-[Lato,sans-serif] text-[8px] text-[#4a4a4a]">
      <TitleBar />
      <Tabs />
      <Ribbon />
      <div className="flex min-h-0 flex-1">
        <SidePanel />
        <Viewport />
      </div>
      <StatusBar />
      <Taskbar />
      <svg viewBox="0 0 132 132" className="pointer-events-none absolute -top-1 left-[398px] size-[132px]" fill="none" aria-hidden="true">
        <circle cx="66" cy="66" r="64.500" stroke="#fff" strokeWidth="3" opacity=".5" />
        <circle cx="66" cy="66" r="64.500" stroke="#77797d" strokeWidth="1.700" />
        <path d="M67 66v12l3-2 2 4 2-1-2-4h4z" fill="#fff" stroke="#555" strokeWidth=".8" />
      </svg>
    </div>
  );
}
